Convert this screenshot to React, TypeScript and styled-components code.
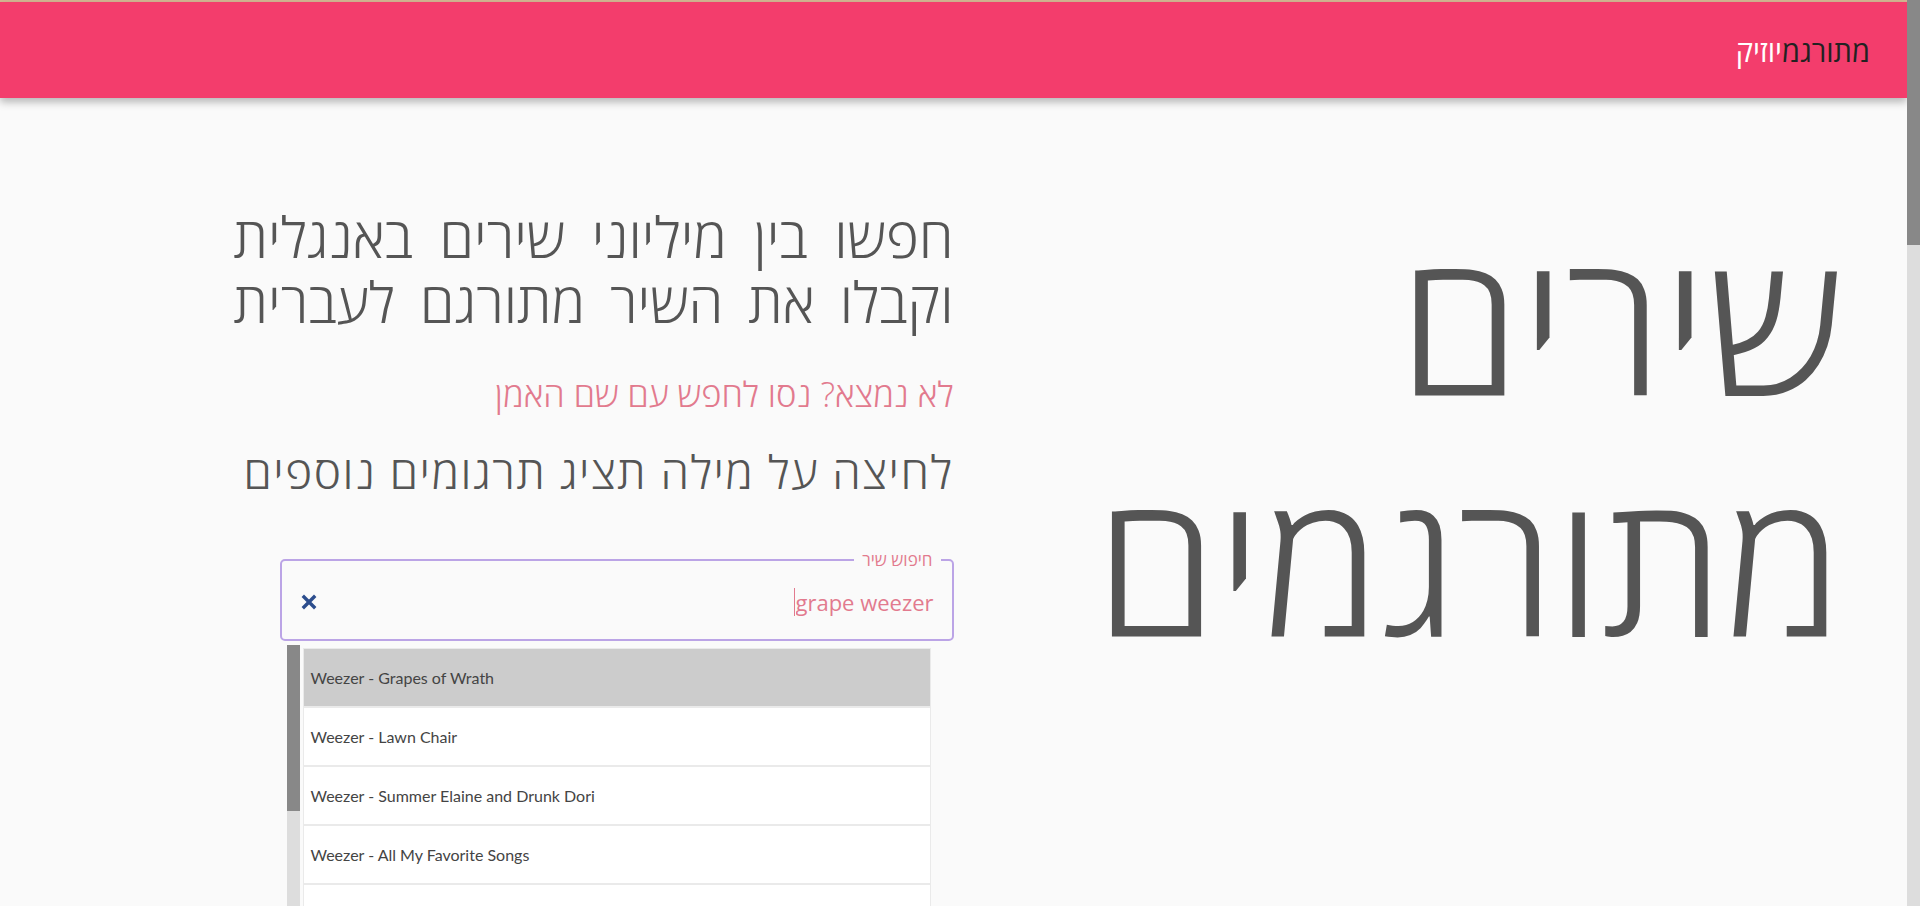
import styled, { createGlobalStyle } from 'styled-components';

const GlobalStyle = createGlobalStyle`
  html, body {
    margin: 0;
    padding: 0;
    background-color: #fafafa;
    font-family: 'Open Sans', 'DejaVu Sans', sans-serif;
  }
`;

const Frame = styled.div`
  display: flex;
  height: 100vh;
  overflow: hidden;
`;

const Viewport = styled.div`
  flex: 1;
  min-width: 0;
  overflow: hidden;
  direction: rtl;
`;

const Rail = styled.div<{ $thumb: number }>`
  width: 13px;
  flex-shrink: 0;
  background: linear-gradient(
    to bottom,
    #888888 0,
    #888888 ${(p) => p.$thumb}px,
    #dddddd ${(p) => p.$thumb}px
  );
`;

const TopStrip = styled.div`
  height: 2px;
  background-color: #d5b793;
`;

const Header = styled.header`
  height: 96px;
  background-color: #f33d6c;
  box-shadow: 0 4px 8px rgba(0, 0, 0, 0.28);
  display: flex;
  align-items: center;
  padding: 0 37px;
`;

const Brand = styled.div`
  font-size: 29px;
  line-height: 1;
`;

const BrandPart = styled.span<{ $light?: boolean }>`
  color: ${(p) => (p.$light ? '#ffffff' : '#222222')};
`;

const Main = styled.main`
  display: grid;
  grid-template-columns: 1fr 1fr;
  align-items: start;
`;

const TitleCol = styled.section`
  padding: 101px 64px 0 0;
`;

const BigTitle = styled.h1`
  margin: 0;
  font-size: 198px;
  font-weight: 300;
  line-height: 241px;
  color: #555555;
`;

const InfoCol = styled.section`
  padding-top: 106px;
  display: flex;
  flex-direction: column;
  align-items: flex-start;
`;

const Lead = styled.h2`
  margin: 0;
  width: 720px;
  font-size: 56px;
  font-weight: 300;
  line-height: 65px;
  color: #555555;
  text-align: justify;
  text-align-last: justify;
`;

const Hint = styled.p<{ $pink?: boolean }>`
  margin: ${(p) => (p.$pink ? '38px 0 0' : '25px 0 0')};
  font-size: ${(p) => (p.$pink ? '34.5px' : '46px')};
  font-weight: 300;
  letter-spacing: ${(p) => (p.$pink ? '0' : '1.5px')};
  line-height: 1.3;
  color: ${(p) => (p.$pink ? '#e27a8e' : '#555555')};
`;

const SearchBox = styled.fieldset`
  margin: 48px 0 0;
  width: 674px;
  box-sizing: border-box;
  border: 2px solid #bba4e6;
  border-radius: 5px;
  padding: 0 11px 0 13px;
  min-width: 0;
`;

const Legend = styled.legend`
  padding: 0 8px;
  font-size: 17px;
  line-height: 20px;
  color: #e27a8e;
`;

const SearchRow = styled.div`
  direction: ltr;
  height: 69px;
  display: flex;
  align-items: center;
  padding: 0 7px 4px 5px;
  box-sizing: border-box;
`;

const ClearButton = styled.button`
  border: none;
  background: none;
  padding: 0;
  width: 18px;
  height: 18px;
  display: flex;
  align-items: center;
  justify-content: center;
  cursor: pointer;
`;

const Spacer = styled.div`
  flex: 1;
`;

const Caret = styled.span`
  width: 1px;
  height: 28px;
  margin-right: 1px;
  background-color: #e27a8e;
`;

const SearchInput = styled.input`
  field-sizing: content;
  width: 138px;
  border: none;
  outline: none;
  background: transparent;
  padding: 0;
  font-family: 'Open Sans', sans-serif;
  font-size: 22px;
  color: #e27a8e;
  text-align: right;
`;

const Results = styled.div`
  direction: ltr;
  margin: 4px 23px 0 0;
  width: 644px;
  height: 270px;
  display: flex;
  gap: 3px;
`;

const ResultList = styled.ul`
  flex: 1;
  margin: 3px 0 0;
  padding: 0;
  list-style: none;
`;

const ResultItem = styled.li<{ $active?: boolean }>`
  height: 57px;
  display: flex;
  align-items: center;
  padding: 0 7px;
  border: 1px solid #eaeaea;
  background-color: ${(p) => (p.$active ? '#cccccc' : '#ffffff')};
  font-family: 'Lato', sans-serif;
  font-size: 16px;
  color: #444444;
`;

const songs = [
  'Weezer - Grapes of Wrath',
  'Weezer - Lawn Chair',
  'Weezer - Summer Elaine and Drunk Dori',
  'Weezer - All My Favorite Songs',
  'Weezer - Island in the Sun',
];

const ClearIcon = () => (
  <svg width="16" height="16" viewBox="0 0 16 16">
    <path
      d="M3 3 L13 13 M13 3 L3 13"
      stroke="#2c4d8d"
      strokeWidth="3.4"
      strokeLinecap="square"
    />
  </svg>
);

const App = () => {
  return (
    <Frame>
      <GlobalStyle />
      <Viewport>
        <TopStrip />
        <Header>
          <Brand>
            <BrandPart>מתורגמ</BrandPart>
            <BrandPart $light>יוזיק</BrandPart>
          </Brand>
        </Header>
        <Main>
          <TitleCol>
            <BigTitle>
              שירים
              <br />
              מתורגמים
            </BigTitle>
          </TitleCol>
          <InfoCol>
            <Lead>חפשו בין מיליוני שירים באנגלית וקבלו את השיר מתורגם לעברית</Lead>
            <Hint $pink>לא נמצא? נסו לחפש עם שם האמן</Hint>
            <Hint>לחיצה על מילה תציג תרגומים נוספים</Hint>
            <SearchBox>
              <Legend>חיפוש שיר</Legend>
              <SearchRow>
                <ClearButton type="button" aria-label="נקה">
                  <ClearIcon />
                </ClearButton>
                <Spacer />
                <Caret />
                <SearchInput defaultValue="grape weezer" />
              </SearchRow>
            </SearchBox>
            <Results>
              <Rail $thumb={166} />
              <ResultList>
                {songs.map((song, i) => (
                  <ResultItem key={song} $active={i === 0}>
                    {song}
                  </ResultItem>
                ))}
              </ResultList>
            </Results>
          </InfoCol>
        </Main>
      </Viewport>
      <Rail $thumb={245} />
    </Frame>
  );
};

export default App;
